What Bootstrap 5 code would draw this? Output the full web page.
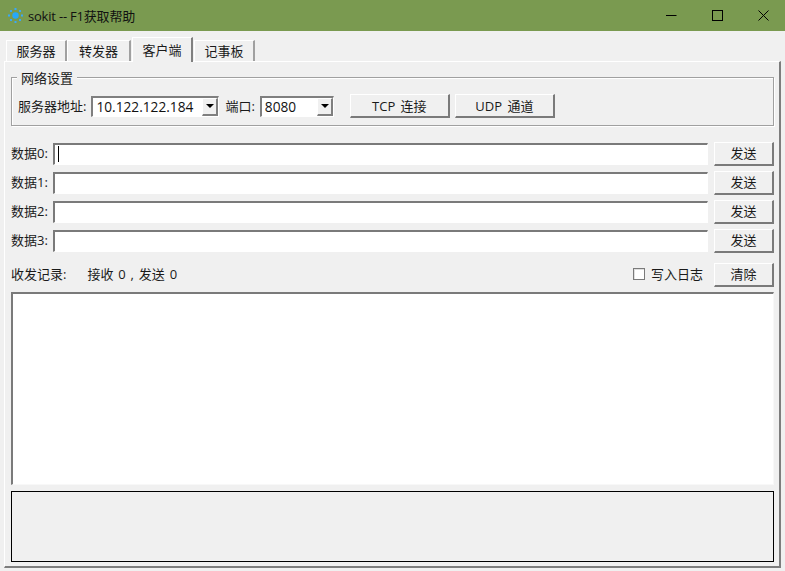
<!DOCTYPE html>
<html lang="zh">
<head>
<meta charset="utf-8">
<title>sokit</title>
<link href="https://cdn.jsdelivr.net/npm/bootstrap@5.3.0/dist/css/bootstrap.min.css" rel="stylesheet">
<style>
html,body{height:571px;overflow:hidden;background:#f0f0f0}
body{font-family:"Open Sans","Noto Sans CJK SC",sans-serif;font-size:13px;line-height:18px;color:#1a1a1a}
.titlebar{height:31px;background:#7a9a50;color:#111;padding-left:7px;overflow:hidden}
.titlebar .ttl{margin-left:4px;font-size:13px;letter-spacing:-.2px}
.winbtns{margin-left:auto;margin-right:-1px}
.winbtn{width:46px;height:31px}
.tabs-wrap{padding:6px 0 0 6px;height:30px;position:relative;z-index:1}
.tabs-wrap .nav-tabs{border:0;--bs-nav-tabs-border-width:0;align-items:flex-end;height:25px;flex-wrap:nowrap}
.tabs-wrap .nav-link{margin:0 0 1px;width:61px;height:21px;padding:0;border:0;border-top:1px solid #fff;border-left:1px solid #fff;border-right:2px solid #a0a0a0;border-radius:0;background:#f0f0f0;color:#1a1a1a;text-align:center;font-size:13px;line-height:20px}
.tabs-wrap .nav-item.t2 .nav-link{width:64px}
.tabs-wrap .nav-item.t3{margin-left:1px}
.tabs-wrap .nav-link.active{margin-bottom:0;height:25px;background:#f0f0f0;color:#1a1a1a;line-height:24px;border-top:1px solid #fff;border-left:1px solid #fff;border-right:2px solid #808080;position:relative}
.tabs-wrap .nav-item.t4{margin-left:1px}
.pane-box{margin:0 4px;height:507px;border-top:1px solid #fff;border-left:1px solid #fff;border-right:2px solid #7d7d7d;border-bottom:2px solid #7d7d7d;padding:15px 5px 0 6px}
.grp{position:relative;height:49px;border:1px solid #a0a0a0;box-shadow:1px 1px 0 #fff,inset 1px 1px 0 #fff;padding:16px 0 0 6px;margin-bottom:16px}
.grp-title{position:absolute;left:5px;top:-8px;padding:0 4px;background:#f0f0f0;font-size:13px;line-height:17px}
.combo{height:21px;background:#fff;border:solid;border-width:2px 1px 1px 2px;border-color:#7f7f7f #fff #fff #7f7f7f}
.combo select{flex:1;min-width:0;height:18px;border:0;padding:0 0 0 3px;appearance:none;background:#fff;font:inherit;font-size:13.7px;line-height:18px;color:#111;outline:0;box-shadow:none}
.combo-arrow{width:16px;height:18px;background:#f0f0f0;border:solid;border-width:1px 2px 2px 1px;border-color:#fff #7f7f7f #7f7f7f #fff;position:relative}
.combo-arrow::after{content:"";position:absolute;left:3px;top:5px;border:4px solid transparent;border-top:4px solid #000;border-bottom:0}
.ip-combo{width:128px;margin-left:5px}
.port-combo{width:74px;margin-left:5px}
.lbl-port{margin-left:6px}
.wbtn{--bs-btn-padding-x:0;--bs-btn-padding-y:0;--bs-btn-font-size:13px;--bs-btn-line-height:20px;--bs-btn-color:#1a1a1a;--bs-btn-bg:#f0f0f0;--bs-btn-hover-bg:#f0f0f0;--bs-btn-hover-color:#1a1a1a;--bs-btn-active-bg:#f0f0f0;--bs-btn-border-width:0;--bs-btn-border-radius:0;height:24px;border:solid;border-width:1px 2px 2px 1px;border-color:#fff #7a7a7a #7a7a7a #fff;flex:none}
.wide{width:100px;word-spacing:2px}
.tcp{margin-left:16px}
.udp{margin-left:5px}
.narrow{width:60px;margin-left:6px;padding-bottom:1px}
.data-row{height:24px;margin-bottom:5px}
.data-lbl{width:42px;flex:none;white-space:nowrap;padding-bottom:2px}
.data-input{flex:1;min-width:0;height:22px;padding:0;border:solid;border-width:2px 1px 1px 2px;border-color:#7a7a7a #fff #fff #7a7a7a;border-radius:0;background-color:#fff;box-shadow:none}
.data-input:focus{border-color:#7a7a7a #fff #fff #7a7a7a;box-shadow:none}
.has-caret,.has-caret:focus{background-image:linear-gradient(#000,#000);background-repeat:no-repeat;background-size:1px 16px;background-position:3px 1px}
.rec-row{height:24px;margin-top:10px}
.rec-row>span{padding-bottom:2px}
.rec-count{margin-left:21px;word-spacing:1.5px}
.chk{margin-left:auto;margin-right:5px;padding-bottom:2px}
.chk .form-check-input{width:12px;height:12px;margin:0 6px 0 0;border:1px solid #7a7a7a;border-radius:0;background-color:#fff;box-shadow:inset 1px 1px 0 #e0e0e0}
.log-box{height:193px;margin-top:5px;background:#fff;border:solid;border-width:2px 1px 1px 2px;border-color:#7a7a7a #f8f8f8 #f8f8f8 #7a7a7a;border-radius:0;padding:0;resize:none;box-shadow:none}
.status-box{height:71px;margin-top:6px;border:1px solid #000;background:#f0f0f0}
</style>
</head>
<body>
<div class="titlebar d-flex align-items-center">
  <svg width="17" height="17" viewBox="0 0 17 17" aria-hidden="true">
    <circle cx="8.5" cy="8.5" r="3.2" fill="#28a8fa"/>
    <g fill="#38a8fa">
      <rect x="7.5" y="1" width="2" height="2"/><rect x="7.5" y="14" width="2" height="2"/>
      <rect x="1" y="7.5" width="2" height="2"/><rect x="14" y="7.5" width="2" height="2"/>
      <rect x="3" y="3" width="2" height="2"/><rect x="12" y="3" width="2" height="2"/>
      <rect x="3" y="12" width="2" height="2"/><rect x="12" y="12" width="2" height="2"/>
    </g>
  </svg>
  <span class="ttl">sokit -- F1获取帮助</span>
  <div class="winbtns d-flex">
    <div class="winbtn d-flex align-items-center justify-content-center"><svg width="11" height="11" viewBox="0 0 11 11"><path d="M0 5.5H10.5" stroke="#000" fill="none"/></svg></div>
    <div class="winbtn d-flex align-items-center justify-content-center"><svg width="11" height="11" viewBox="0 0 11 11"><rect x=".5" y=".5" width="10" height="10" stroke="#000" fill="none"/></svg></div>
    <div class="winbtn d-flex align-items-center justify-content-center"><svg width="11" height="11" viewBox="0 0 11 11"><path d="M.5 .5L10.5 10.5M10.5 .5L.5 10.5" stroke="#000" fill="none"/></svg></div>
  </div>
</div>
<div class="tabs-wrap">
  <ul class="nav nav-tabs">
    <li class="nav-item"><a class="nav-link" href="#">服务器</a></li>
    <li class="nav-item t2"><a class="nav-link" href="#">转发器</a></li>
    <li class="nav-item t3"><a class="nav-link active" href="#">客户端</a></li>
    <li class="nav-item t4"><a class="nav-link" href="#">记事板</a></li>
  </ul>
</div>
<div class="pane-box">
  <div class="grp d-flex align-items-start">
    <span class="grp-title">网络设置</span>
    <div class="d-flex align-items-center">
      <span>服务器地址:</span>
      <div class="combo ip-combo d-flex"><select class="form-select" aria-label="服务器地址"><option>10.122.122.184</option></select><span class="combo-arrow"></span></div>
      <span class="lbl-port">端口:</span>
      <div class="combo port-combo d-flex"><select class="form-select" aria-label="端口"><option>8080</option></select><span class="combo-arrow"></span></div>
      <button class="btn wbtn wide tcp" type="button">TCP 连接</button>
      <button class="btn wbtn wide udp" type="button">UDP 通道</button>
    </div>
  </div>
  <div class="data-row d-flex align-items-center"><span class="data-lbl">数据0:</span><input class="form-control data-input has-caret" type="text" aria-label="数据0"><button class="btn wbtn narrow" type="button">发送</button></div>
  <div class="data-row d-flex align-items-center"><span class="data-lbl">数据1:</span><input class="form-control data-input" type="text" aria-label="数据1"><button class="btn wbtn narrow" type="button">发送</button></div>
  <div class="data-row d-flex align-items-center"><span class="data-lbl">数据2:</span><input class="form-control data-input" type="text" aria-label="数据2"><button class="btn wbtn narrow" type="button">发送</button></div>
  <div class="data-row d-flex align-items-center"><span class="data-lbl">数据3:</span><input class="form-control data-input" type="text" aria-label="数据3"><button class="btn wbtn narrow" type="button">发送</button></div>
  <div class="rec-row d-flex align-items-center">
    <span>收发记录:</span>
    <span class="rec-count">接收 0 , 发送 0</span>
    <label class="chk d-flex align-items-center"><input class="form-check-input" type="checkbox">写入日志</label>
    <button class="btn wbtn narrow" type="button">清除</button>
  </div>
  <textarea class="form-control log-box d-block" aria-label="收发记录"></textarea>
  <div class="status-box"></div>
</div>
</body>
</html>
